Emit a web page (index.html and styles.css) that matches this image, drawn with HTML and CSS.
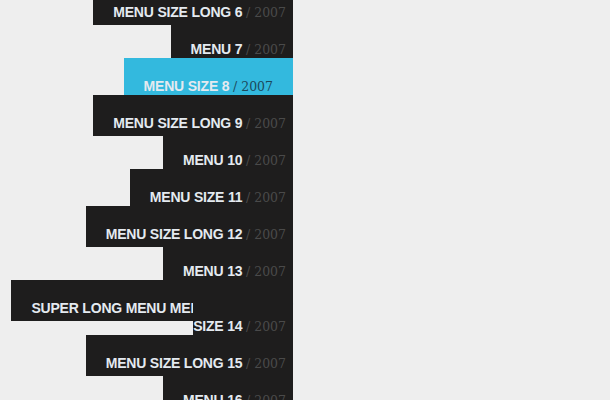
FILE: index.html
```html
<!DOCTYPE html>
<html lang="en">
<head>
    <meta charset="UTF-8">
    <meta name="viewport" content="width=device-width, initial-scale=1.0">
    <title>Menu</title>
    <link rel="stylesheet" href="styles.css">
</head>
<body>

    <ul class="menu">
        <li><a href="#">Menu size long 6 <span class="year">/ 2007</span></a></li>
        <li><a href="#">Menu 7 <span class="year">/ 2007</span></a></li>
        <li class="active"><a href="#">Menu size 8 <span class="year">/ 2007</span></a></li>
        <li><a href="#">Menu size long 9 <span class="year">/ 2007</span></a></li>
        <li><a href="#">Menu 10 <span class="year">/ 2007</span></a></li>
        <li><a href="#">Menu size 11 <span class="year">/ 2007</span></a></li>
        <li><a href="#">Menu size long 12 <span class="year">/ 2007</span></a></li>
        <li><a href="#">Menu 13 <span class="year">/ 2007</span></a></li>
        <li><a href="#">Super long menu menu menu text size 14 <span class="year">/ 2007</span></a></li>
        <li><a href="#">Menu size long 15 <span class="year">/ 2007</span></a></li>
        <li><a href="#">Menu 16 <span class="year">/ 2007</span></a></li>
    </ul>

</body>
</html>
```

FILE: styles.css
```css
body {
    font-family: "Liberation Sans", Arial, sans-serif;
    background-color: #eeeeee;
    margin: 0;
    padding: 0;
}

.menu {
    list-style: none;
    margin: -16px 0 0 0;
    padding: 0;
    width: 293px;
    text-align: right;
}

.menu li {
    padding-top: 19px;
    line-height: 18px;
}

.menu a {
    padding: 20px 7px 5px 20px;
    background-color: #1e1d1d;
    color: #e4eaf0;
    font-size: 14px;
    font-weight: bold;
    letter-spacing: -0.2px;
    text-transform: uppercase;
    text-decoration: none;
}

.menu .year {
    font-family: "DejaVu Serif", Georgia, serif;
    font-size: 12.5px;
    line-height: 12px;
    font-weight: normal;
    letter-spacing: 0;
    color: #4a4a4a;
    font-variant-numeric: oldstyle-nums;
}

.menu .active a {
    padding-right: 20px;
    background-color: #33b9de;
}

.menu .active .year {
    color: #1c4a5c;
}
```
